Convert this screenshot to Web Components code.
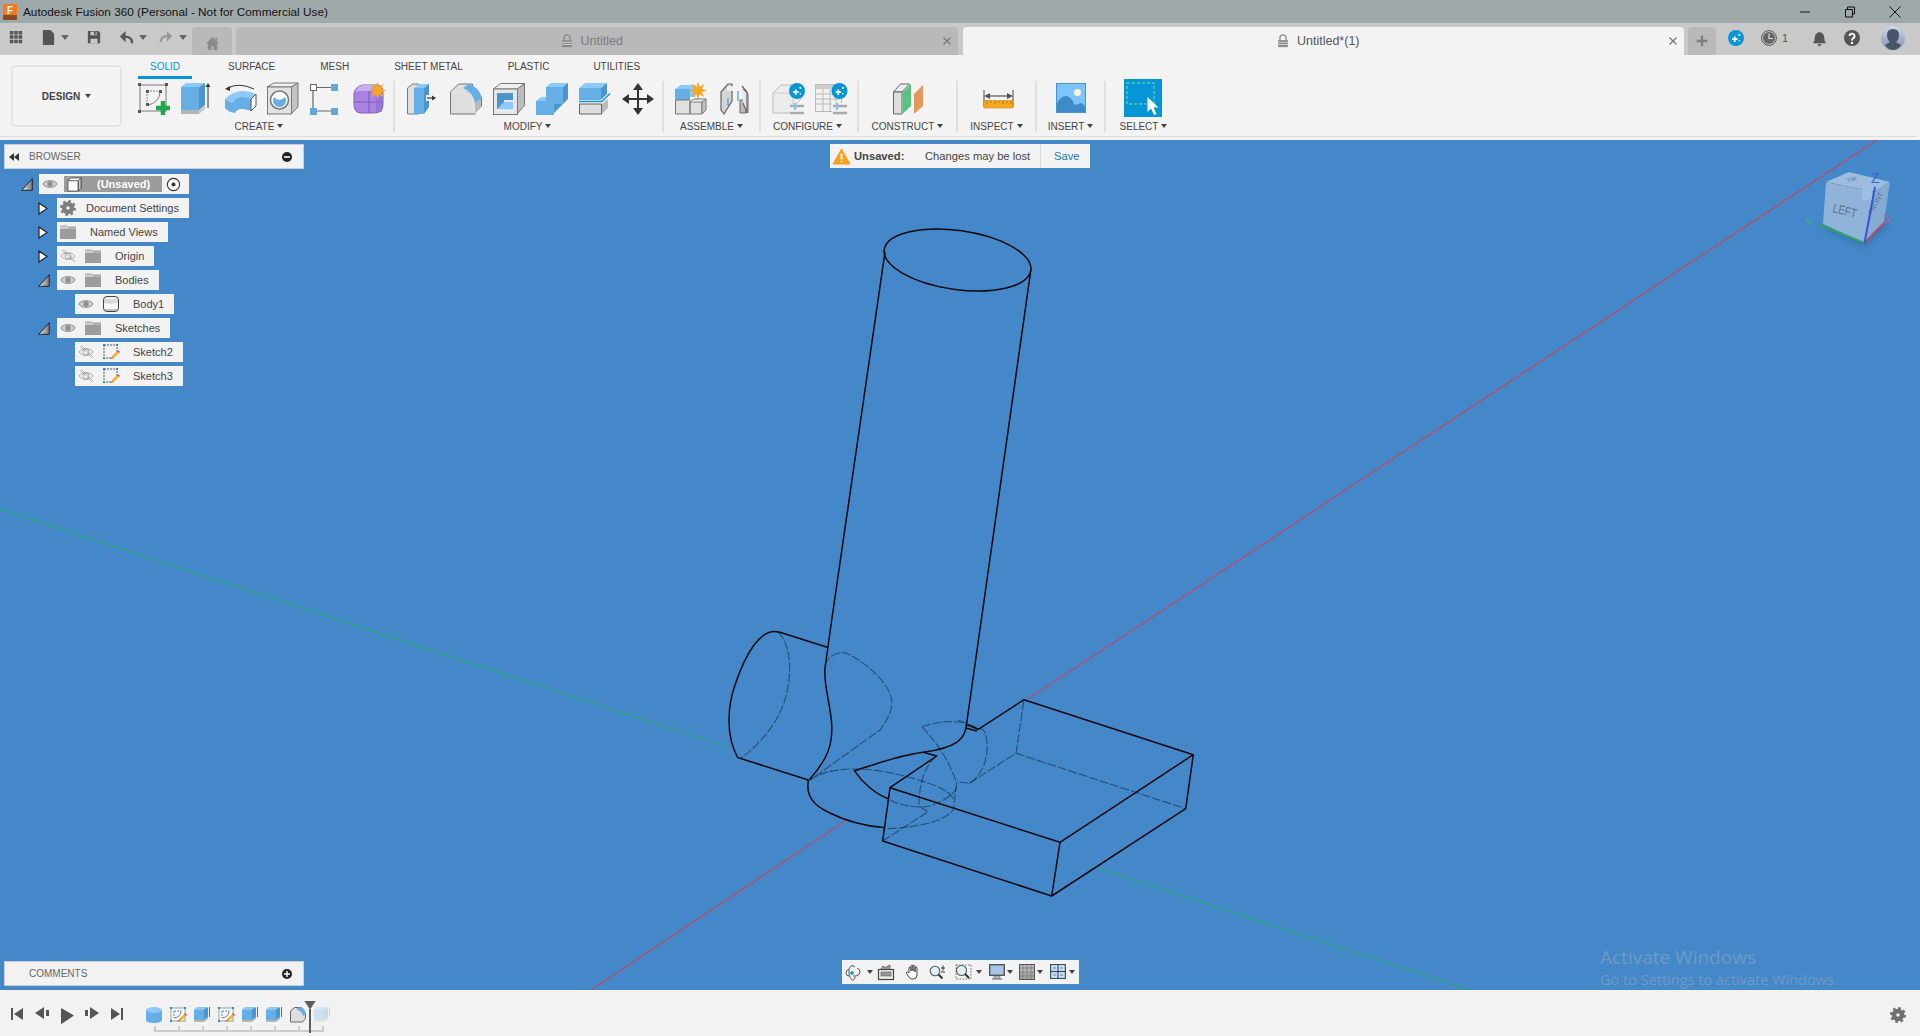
<!DOCTYPE html>
<html>
<head>
<meta charset="utf-8">
<title>Autodesk Fusion 360</title>
<style>
  html, body { margin: 0; height: 100%; overflow: hidden; }
  body { font-family: "Liberation Sans", Arial, sans-serif; color: #444; background: #f3f3f3; }
  #app { display: flex; flex-direction: column; height: 1036px; }
</style>
</head>
<body>
<div id="app">
  <title-bar></title-bar>
  <tab-bar></tab-bar>
  <tool-ribbon>
    <ribbon-group label="CREATE" style="--w:262px;--pad:5px;--gap:11px;--shift:-8px">
      <fu-icon name="sketch"></fu-icon><fu-icon name="extrude"></fu-icon><fu-icon name="revolve"></fu-icon>
      <fu-icon name="hole"></fu-icon><fu-icon name="pattern"></fu-icon><fu-icon name="form"></fu-icon>
    </ribbon-group>
    <ribbon-group label="MODIFY" style="--w:269px;--pad:12px;--gap:11px;--shift:-2px">
      <fu-icon name="presspull"></fu-icon><fu-icon name="fillet"></fu-icon><fu-icon name="shell"></fu-icon>
      <fu-icon name="combine"></fu-icon><fu-icon name="split"></fu-icon><fu-icon name="move"></fu-icon>
    </ribbon-group>
    <ribbon-group label="ASSEMBLE" style="--w:97px;--pad:11px;--gap:13px">
      <fu-icon name="component"></fu-icon><fu-icon name="joint"></fu-icon>
    </ribbon-group>
    <ribbon-group label="CONFIGURE" style="--w:98px;--pad:11px;--gap:11px;--shift:-3px">
      <fu-icon name="configure"></fu-icon><fu-icon name="table"></fu-icon>
    </ribbon-group>
    <ribbon-group label="CONSTRUCT" style="--w:99px;--pad:34px;--gap:0px">
      <fu-icon name="construct"></fu-icon>
    </ribbon-group>
    <ribbon-group label="INSPECT" style="--w:79px;--pad:25px;--gap:0px">
      <fu-icon name="inspect"></fu-icon>
    </ribbon-group>
    <ribbon-group label="INSERT" style="--w:69px;--pad:19px;--gap:0px">
      <fu-icon name="insert"></fu-icon>
    </ribbon-group>
    <ribbon-group label="SELECT" last style="--w:75px;--pad:18px;--gap:0px">
      <fu-icon name="select" size="38" style="margin-top:-4px"></fu-icon>
    </ribbon-group>
  </tool-ribbon>
  <model-view>
    <browser-panel>
      <browser-node root toggle="open" eye="on" kind="cube" label="(Unsaved)"></browser-node>
      <browser-node level="1" toggle="closed" kind="gear" label="Document Settings" style="--tg:1px"></browser-node>
      <browser-node level="1" toggle="closed" kind="folder" label="Named Views"></browser-node>
      <browser-node level="1" toggle="closed" eye="off" kind="folder" label="Origin"></browser-node>
      <browser-node level="1" toggle="open" eye="on" kind="folder" label="Bodies"></browser-node>
      <browser-node level="2" eye="on" kind="body" label="Body1"></browser-node>
      <browser-node level="1" toggle="open" eye="on" kind="folder" label="Sketches"></browser-node>
      <browser-node level="2" eye="off" kind="sketchnode" label="Sketch2"></browser-node>
      <browser-node level="2" eye="off" kind="sketchnode" label="Sketch3"></browser-node>
    </browser-panel>
    <unsaved-banner></unsaved-banner>
    <view-cube></view-cube>
    <comments-panel></comments-panel>
    <nav-bar></nav-bar>
    <activate-note></activate-note>
  </model-view>
  <time-line></time-line>
</div>

<script>
const FRONT = "#66aee6", TOP = "#8cc8f8", SIDE = "#4b95cd", GREY = "#dadada", GSIDE = "#b4b4b4", EDGE = "#777";
const star = (cx, cy, r) => {
  let p = [];
  for (let i = 0; i < 16; i++) {
    const a = i * Math.PI / 8, q = i % 2 ? r * 0.45 : r;
    p.push((cx + q * Math.sin(a)).toFixed(1) + "," + (cy - q * Math.cos(a)).toFixed(1));
  }
  return `<polygon points="${p.join(" ")}" fill="#f7a51c"/>`;
};
const spark = (cx, cy, r) => `<circle cx="${cx}" cy="${cy}" r="${r}" fill="#0696d7"/>
  <path d="M${cx - r * .5} ${cy + r * .15}h${r * .7}M${cx - r * .15} ${cy - r * .2}v${r * .7}" stroke="#fff" stroke-width="${r * .22}"/>
  <circle cx="${cx + r * .42}" cy="${cy - r * .38}" r="${r * .14}" fill="#fff"/><circle cx="${cx + r * .42}" cy="${cy + r * .35}" r="${r * .1}" fill="#fff"/>`;
const gear = (c, r, col) => `<circle cx="${c}" cy="${c}" r="${r * .5}" fill="none" stroke="${col}" stroke-width="${r * .56}"/>
  <circle cx="${c}" cy="${c}" r="${r * .86}" fill="none" stroke="${col}" stroke-width="${r * .28}" stroke-dasharray="${(r * .86 * Math.PI / 8).toFixed(2)}"/>`;
const eyeOn = `<path d="M1 8c3-4.500 11-4.500 14 0c-3 4.500-11 4.500-14 0z" fill="#d8d8d8" stroke="#9a9a9a" stroke-width="1.300"/><circle cx="8" cy="8" r="2.800" fill="#8f8f8f"/>`;
const pencil = `<path d="M8 15l1-3 5-5 2 2-5 5z" fill="#f3b33d"/><path d="M14 7l1-1 2 2-1 1z" fill="#e8434a"/><path d="M8 15l1-2 1 1z" fill="#555"/>`;

const ICONS = {
  sketch: [32, `<rect x="2" y="2" width="26" height="26" fill="none" stroke="#777"/>
    <path d="M9 8h12M9 8v14" stroke="#888" stroke-dasharray="2 1" fill="none"/><path d="M22 8c0 8-5 13-13 14" fill="none" stroke="#777"/>
    <path d="M0 0h3v3H0zM27 0h3v3h-3zM0 27h3v3H0zM8 7h3v3H8zM21 7h3v3h-3zM8 20h3v3H8z" fill="#555"/>
    <path d="M18 25h14M25 18v14" stroke="#1ea84c" stroke-width="4.500"/>`],
  extrude: [32, `<path d="M0 4l5-4h19l-6 4z" fill="${TOP}"/><path d="M0 4h18v23H0z" fill="${FRONT}"/><path d="M18 4l6-4v22l-6 5z" fill="${SIDE}"/>
    <path d="M0 27h18v4H0z" fill="${GSIDE}"/><path d="M18 27l6-5v4l-6 5z" fill="#c8c8c8"/>
    <path d="M27 25V3" stroke="#333"/><path d="M27 0l2.500 4h-5z" fill="#333"/>`],
  revolve: [32, `<path d="M1 16Q14 3 32 11l-5 5Q14 10 8 20z" fill="${TOP}"/><path d="M1 16l7 4Q14 10 27 16v12Q14 23 11 30 4 29 1 25z" fill="${FRONT}"/>
    <path d="M27 16l5-5v12l-5 5z" fill="#fff" stroke="#555"/><path d="M4 5Q15-1 30 6" fill="none" stroke="#333"/><path d="M1 6l5-3 0 5z" fill="#333"/>`],
  hole: [32, `<path d="M0 4l7-4h24l-7 4z" fill="#efefef" stroke="${EDGE}" stroke-width="1"/><path d="M24 4l7-4v24l-7 7z" fill="#c4c4c4" stroke="${EDGE}"/>
    <rect x=".5" y="4" width="24" height="27" fill="#e2e2e2" stroke="${EDGE}"/><circle cx="12.500" cy="17" r="9" fill="#fff" stroke="#777" stroke-width="1.500"/>
    <path d="M7 14a6.500 6.500 0 1 0 11 0q-6 6-11 0z" fill="${FRONT}"/>`],
  pattern: [32, `<path d="M6 4.500h15M3 8v17M6 28h15" stroke="#666" stroke-width="1.200"/><rect x=".5" y="1.500" width="6" height="6" fill="#fff" stroke="#666"/>
    <rect x="21" y="1" width="7" height="7" fill="#5fa9e0"/><rect x="0" y="25" width="7" height="7" fill="#5fa9e0"/><rect x="21" y="25" width="7" height="7" fill="#5fa9e0"/>`],
  form: [32, `<path d="M1 10q2-7 9-8h14q6 0 6 8v12q0 8-9 8H8q-7 0-7-9z" fill="#a884e0" stroke="#8360bf"/><path d="M2 9q2-6 9-7h12l-6 6H5z" fill="#c7aef0"/>
    <path d="M1 19h29M16 8v22" stroke="#7f5cc0" stroke-width="1.200"/><path d="M26 14v15" stroke="#8d6ccb" stroke-width="6" opacity=".6"/>${star(24.500, 7.500, 9)}`],
  presspull: [32, `<path d="M.5 5l5-4h6v30H.5z" fill="#e0e0e0" stroke="${EDGE}"/><path d="M7 5l5-4h10l-5 4z" fill="${TOP}"/><path d="M7 5h10v26H7z" fill="${FRONT}"/>
    <path d="M17 5l5-4v23l-5 7z" fill="${SIDE}"/><rect x="19" y="12" width="9" height="6" fill="#f3f3f3"/><path d="M20 15h7" stroke="#333" stroke-width="1.200"/><path d="M29 15l-4-2.500v5z" fill="#333"/>`],
  fillet: [32, `<path d="M.5 9l8-8h14v8l9 5v9l-6 6v2H.5z" fill="#dedede" stroke="${EDGE}"/><path d="M25 18l6-5v10l-6 8z" fill="#b9b9b9"/>
    <path d="M13 5l6-4q10 3 13 14l-7 5q-2-11-12-15z" fill="${FRONT}"/><path d="M1 9h10q13 2 14 22" fill="none" stroke="#e8e8e8"/>`],
  shell: [32, `<path d="M.5 6l7-5.500h24l-7 5.500z" fill="#f0f0f0" stroke="${EDGE}"/><path d="M24.500 6l7-5.500v22l-7 8z" fill="#bdbdbd" stroke="${EDGE}"/>
    <rect x=".5" y="6" width="24" height="25.500" fill="#e6e6e6" stroke="${EDGE}"/><path d="M4 10h16v7H11v9H4z" fill="#4b95cd"/><path d="M4 26l7-7h9v8H4z" fill="${TOP}"/><path d="M4 27h16" stroke="#fff"/>`],
  combine: [32, `<path d="M10 4l5-4h17l-5 4zM0 18l5-4h6l-1 4z" fill="${TOP}"/><path d="M10 4h17v17h-9v11H0V18h10z" fill="${FRONT}"/><path d="M27 4l5-4v16l-5 5zM18 21h9l-3 3-6 6z" fill="${SIDE}"/>`],
  split: [32, `<path d="M0 5l6-5h22l-6 5z" fill="${TOP}"/><path d="M0 5h22v12H0z" fill="${FRONT}"/><path d="M22 5l6-5v11l-6 6z" fill="${SIDE}"/>
    <path d="M.5 21h22v10H.5z" fill="#dedede" stroke="#666"/><path d="M23 21l6-5v9l-6 6z" fill="#bbb"/>
    <path d="M0 18.500h23l8-8" fill="none" stroke="#1396e2" stroke-width="1.500"/>`],
  move: [32, `<path d="M16 4v24M4 16h24" stroke="#333" stroke-width="2"/><path d="M16 0l5 7H11zM16 32l5-7H11zM0 16l7-5v10zM32 16l-7-5v10z" fill="#333"/>`],
  component: [32, `<path d="M.5 14v-8l5-4h15v12z" fill="${TOP}"/><path d="M0 6h15v12H0z" fill="${FRONT}"/><path d="M.5 17h14.500v14H.5zM15 19h12v12H15z" fill="#e0e0e0" stroke="#777"/>
    <path d="M27 19l4-3v11l-4 4z" fill="#c4c4c4" stroke="#777"/><path d="M15 19l4-3h12" fill="#eee" stroke="#777"/>${star(23, 7.500, 9)}`],
  joint: [32, `<path d="M1 9l7-8h4v17l-8 13-3-4z" fill="#d4d4d4" stroke="#666" stroke-width="1.200"/><path d="M7 3h6v5H7z" fill="#eee"/><path d="M8 15v8" stroke="#2288d0"/>
    <path d="M20 17h6v13h-6z" fill="#bbb" stroke="#666"/><path d="M22 3l5 6v21l-4-10" fill="#e6e6e6" stroke="#666" stroke-width="1.200"/><path d="M23 6l5 5v19" fill="none" stroke="#666"/>
    <path d="M18 8v10" stroke="#2288d0"/>`],
  configure: [32, `<path d="M1 10l8-8h16l4 4v10l-7 7v7H1z" fill="#ececec" stroke="#bcbcbc"/><path d="M1 10h20v22" fill="none" stroke="#ccc"/>
    <rect x="18" y="21" width="14" height="11" fill="#f3f3f3"/><path d="M18 23h14M18 30h14" stroke="#aaa" stroke-width="2.500"/><path d="M23 20v7" stroke="#8cc1ea" stroke-width="2.500"/>${spark(25, 8, 8)}`],
  table: [32, `<rect x=".5" y="1.500" width="26" height="27" fill="#f1f1f1" stroke="#bbb"/><path d="M1 2h26v4H1z" fill="#ccc"/><path d="M1 11h25M1 16h25M1 21h25M8 6v22M15 6v22M21 6v22" stroke="#bbb"/>
    <rect x="17" y="20" width="15" height="12" fill="#f3f3f3"/><path d="M18 23h14M18 30h14" stroke="#aaa" stroke-width="2.500"/><path d="M22 20v7" stroke="#8cc1ea" stroke-width="2.500"/>${spark(24.500, 8, 8)}`],
  construct: [32, `<path d="M.5 9l7-8h9L9 9z" fill="#eee" stroke="#666"/><path d="M.5 9H9v22H.5z" fill="#dedede" stroke="#666"/><path d="M9.500 9.500L18 1v22l-8.500 8z" fill="#58c480"/><path d="M21 11l9-9v21l-9 8z" fill="#e5965c"/>`],
  inspect: [32, `<path d="M1 7v17M30 7v17" stroke="#666" stroke-width="1.200"/><path d="M3 13h25" stroke="#555" stroke-width="1.200"/><path d="M1 13l6-3v6zM30 13l-6-3v6z" fill="#555"/>
    <rect x="1" y="17.500" width="29" height="7.500" fill="#f5a623" stroke="#d08a10" stroke-width=".6"/><path d="M4 18v3M8 18v2M12 18v3M16 18v2M20 18v3M24 18v2M28 18v3" stroke="#9c6a0a" stroke-width=".8"/>`],
  insert: [32, `<rect x=".5" y=".5" width="29" height="29" fill="#7cc4fa" stroke="#4a93cf"/><path d="M1 29V20q4-7 9-7t8 8l3 1 3-2q3 0 5 4v5z" fill="#3d8cc8"/><circle cx="21.500" cy="9.500" r="3.500" fill="#fbf4c8"/>`],
  select: [38, `<rect width="38" height="38" fill="#0696d7"/><rect x="3" y="4" width="27" height="21" fill="none" stroke="#7fdc9a" stroke-width="1" stroke-dasharray="3 2"/>
    <path d="M23.500 18v15l3.500-3.500 3 6.500 2.500-1-3-6.500h5z" fill="#fff"/>`],
  grid: [16, `<path d="M1 1h4v4H1zM6 1h4v4H6zM11 1h4v4h-4zM1 6h4v4H1zM6 6h4v4H6zM11 6h4v4h-4zM1 11h4v4H1zM6 11h4v4H6zM11 11h4v4h-4z" fill="#555"/>`],
  file: [16, `<path d="M2 0h8l4 4v12H2z" fill="#555"/>`],
  save: [16, `<path d="M1 1h12l2 2v12H1z" fill="#555"/><path d="M4 2h7v4H4zM4 10h8v5H4z" fill="#c9c9c9"/><path d="M8 2h2v3H8z" fill="#555"/>`],
  undo: [16, `<path d="M14 14Q14 7 6 7H4" fill="none" stroke="#555" stroke-width="2.500"/><path d="M7 1L1 7l6 6z" fill="#555"/>`],
  redo: [16, `<path d="M2 14Q2 7 10 7h2" fill="none" stroke="#999" stroke-width="2.500"/><path d="M9 1l6 6-6 6z" fill="#999"/>`],
  home: [16, `<path d="M8 1L1 8h2v7h4v-4h2v4h4V8h2z" fill="#8b8b8b"/><path d="M11 2h2v4l-2-2z" fill="#8b8b8b"/>`],
  lock: [16, `<path d="M4.500 7V4.500a3.500 3.500 0 0 1 7 0V7" fill="none" stroke="#888" stroke-width="1.500"/><path d="M2.500 7h11v8h-11z" fill="#888"/><path d="M2.500 9.500h11M2.500 12h11" stroke="#ddd"/>`],
  close: [16, `<path d="M4 4l8 8M12 4l-8 8" stroke="#777" stroke-width="1.500"/>`],
  plus: [16, `<path d="M8 2v12M2 8h12" stroke="#7d7d7d" stroke-width="2.600"/>`],
  spark: [16, spark(8, 8, 8)],
  clock: [16, `<circle cx="8" cy="8" r="7.400" fill="none" stroke="#555"/><circle cx="8" cy="8" r="6" fill="#666"/><path d="M8 3.500V8.500h4" fill="none" stroke="#ddd" stroke-width="1.200"/>`],
  bell: [16, `<path d="M8 1q-5 1-5 6 0 4-2 6h14q-2-2-2-6 0-5-5-6z" fill="#555"/><path d="M6 14a2 2 0 0 0 4 0z" fill="#555"/>`],
  help: [16, `<circle cx="8" cy="8" r="8" fill="#555"/><path d="M5.500 6a2.500 2.500 0 1 1 3.500 2.400Q8 9 8 10.500" fill="none" stroke="#fff" stroke-width="1.900"/><circle cx="8" cy="13" r="1.200" fill="#fff"/>`],
  rewind: [10, `<path d="M5 1L0 5l5 4zM10 1L5 5l5 4z" fill="#333"/>`],
  eyeon: [16, eyeOn],
  eyeoff: [16, `<path d="M1 8c3-4.500 11-4.500 14 0c-3 4.500-11 4.500-14 0z" fill="none" stroke="#aaa"/><circle cx="8" cy="8" r="3" fill="none" stroke="#aaa"/><path d="M2 2l12 12M3.500 1.500l12 12" stroke="#aaa" stroke-width=".8"/>`],
  folder: [16, `<path d="M0 1.500h7l1 2H0z" fill="#b4b4b4"/><path d="M0 4.500h16v10.500H0z" fill="#9c9c9c"/><path d="M8 2.500h8v2H8z" fill="#a6a6a6"/>`],
  gear: [16, gear(8, 8, "#7d7d7d")],
  cube: [16, `<path d="M1 4l3-3h11v11l-3 3H1z" fill="#fff" stroke="#555"/><path d="M12 4l3-3v11l-3 3z" fill="#c9c9c9" stroke="#555"/><path d="M1 4h11v11" fill="none" stroke="#555"/>`],
  radio: [16, `<circle cx="8" cy="8" r="6.500" fill="#fff" stroke="#333" stroke-width="1.200"/><circle cx="8" cy="8" r="2.200" fill="#333"/>`],
  body: [16, `<rect x=".5" y=".5" width="15" height="15" rx="3.500" fill="#f6f6f6" stroke="#444"/><path d="M1 3h14v4a14 5 0 0 1-14 0z" fill="#d9d9d9"/><path d="M2 14h12" stroke="#7f8fa6"/>`],
  sketchnode: [16, `<path d="M1 1h13v9M1 1v13h7" fill="none" stroke="#555" stroke-dasharray="2 1"/><path d="M0 0h2v2H0zM13 0h2v2h-2zM0 13h2v2H0z" fill="#1c8fe0"/>${pencil}`],
  cylinder: [16, `<path d="M0 3v10q0 3 8 3t8-3V3z" fill="${FRONT}"/><ellipse cx="8" cy="3" rx="8" ry="3" fill="${TOP}"/>`],
  minisketch: [16, `<rect x="1" y="1" width="14" height="13" fill="#fff" stroke="#999"/><path d="M4 4h7M4 4v7" stroke="#1c8fe0" stroke-dasharray="2 1"/><path d="M11 4q0 6-7 7" fill="none" stroke="#777"/>
    <path d="M0 0h2v2H0zM14 0h2v2h-2zM0 13h2v2H0z" fill="#1c8fe0"/>${pencil}`],
  miniextrude: [16, `<path d="M0 2.500L3 0h11l-4 2.500z" fill="${TOP}"/><path d="M0 2.500h10V13H0z" fill="${FRONT}"/><path d="M10 2.500L14 0v10l-4 3z" fill="${SIDE}"/><path d="M0 13h10v2H0zM10 13l4-3v2l-4 3z" fill="${GSIDE}"/><path d="M15.500 0v10" stroke="#444" stroke-width=".8"/>`],
  minifillet: [16, `<path d="M.5 4l4-3.500h7l4 6v5l-3 3.500H.5z" fill="#dedede" stroke="#666"/><path d="M6 2l4-2q5 1 6 7l-3 2q-1-5-7-7z" fill="${FRONT}"/>`],
  first: [12, `<path d="M0 0h2v12H0zM12 0v12L3 6z" fill="#555"/>`],
  prev: [14, `<path d="M9 0v12L0 6zM11 3h3v6h-3z" fill="#555"/>`],
  play: [12, `<path d="M0 0l12 7L0 15z" fill="#555"/>`],
  next: [14, `<path d="M5 0v12l9-6zM0 3h3v6H0z" fill="#555"/>`],
  last: [12, `<path d="M12 0h-2v12h2zM0 0v12l9-6z" fill="#555"/>`],
  gearbig: [16, gear(8, 8, "#6f6f6f")],
  orbit: [16, `<path d="M4 5q-3 1-3 4t3 3M12 4q3 1 3 4t-4 4H8M6 2c-2 1-3 6-1 11s5 3 5 0" fill="none" stroke="#555"/><path d="M6 2q2-1 4 1" fill="none" stroke="#555"/><path d="M5 9h4M7 7v4" stroke="#0696d7" stroke-width="1.500"/>`],
  look: [16, `<rect x=".5" y="5.500" width="15" height="10" fill="#eee" stroke="#444" stroke-width="1.200"/><rect x="3" y="8" width="10" height="4" fill="#999" stroke="#555" stroke-width=".6"/><path d="M3 5l2-3 2 1.500 5-2.500v4" fill="#999" stroke="#555" stroke-width=".7"/>`],
  hand: [16, `<path d="M4 9V4q0-1 1-1t1 1v3V2q0-1 1-1t1 1v5V2.500q0-1 1-1t1 1V8V4q0-1 1-1t1 1v7q0 4-4 4H7q-2 0-3-2L1.500 9.500q-.5-1.500 1-1.500z" fill="#fff" stroke="#333" stroke-width=".9"/>`],
  zoom: [16, `<circle cx="6" cy="7" r="4.800" fill="#dff1f6" stroke="#555" stroke-width="1.100"/><path d="M9.500 10.500l4 4" stroke="#333" stroke-width="2.200"/><path d="M12 4h4M14 1.500v5M12 8h4" stroke="#333"/>`],
  fit: [16, `<rect x="1" y="1" width="15" height="14" fill="none" stroke="#666" stroke-dasharray="1.500 1.500"/><circle cx="6.500" cy="6.500" r="5" fill="#dff1f6" stroke="#555" stroke-width="1.100"/><path d="M10 10l4 4" stroke="#333" stroke-width="2.200"/>`],
  display: [16, `<rect x=".7" y=".7" width="14.600" height="10.600" fill="#9cbfe0" stroke="#444" stroke-width="1.200"/><path d="M2 2h12v8H2z" fill="#a7c7e6"/><path d="M5 12h6v2H5z" fill="#ccc" stroke="#555" stroke-width=".5"/><path d="M3 15h10" stroke="#555"/>`],
  gridview: [16, `<rect x=".5" y=".5" width="15" height="15" fill="#bbb" stroke="#555"/><path d="M4 1v14M8 1v14M12 1v14M1 4h14M1 8h14M1 12h14" stroke="#777" stroke-width=".8"/><rect x="1" y="9" width="14" height="6" fill="#888" opacity=".4"/>`],
  viewports: [16, `<path d="M.7.7h14.600v13.600H.7z" fill="#fff" stroke="#2f4f72" stroke-width="1.300"/><path d="M8 1v13M1 7.500h14" stroke="#2f4f72" stroke-width="1.300"/><path d="M2.500 2.500h4v3h-4zM9.500 2.500h4v3h-4zM2.500 9.500h4v3h-4zM9.500 9.500h4v3h-4z" fill="#8fb4d8"/>`],
  warn: [18, `<path d="M9 1L18 17H0z" fill="#f7a21b" stroke="#f7a21b" stroke-linejoin="round"/><path d="M9 6v6" stroke="#fff" stroke-width="2"/><circle cx="9" cy="14.300" r="1.100" fill="#fff"/>`],
  winmin: [12, `<path d="M1 6h10" stroke="#111"/>`],
  winmax: [12, `<path d="M3.500 3V1h7v7H8.500M1.500 3.500h7v7.500h-7z" fill="none" stroke="#111"/>`],
  winclose: [12, `<path d="M.5.5l11 11M11.500.5l-11 11" stroke="#111"/>`],
  avatar: [24, `<defs><linearGradient id="av" x1="0" y1="0" x2="0" y2="1"><stop offset="0" stop-color="#cfd8e6"/><stop offset="1" stop-color="#7b93b5"/></linearGradient></defs>
    <circle cx="12" cy="12" r="12" fill="url(#av)"/><path d="M12 3q6 0 6 6 0 5-3 7l5 3q-3 5-8 5T4 19l5-3q-3-2-3-7 0-6 6-6z" fill="#48556a"/>`],
};

class FuIcon extends HTMLElement {
  connectedCallback() {
    const [vb, body] = ICONS[this.getAttribute("name")];
    const size = this.getAttribute("size") || (vb === 32 ? 32 : vb);
    this.attachShadow({ mode: "open" }).innerHTML = `
      <style>:host { display: block; flex: none; width: ${size}px; height: ${size}px; } svg { display: block; overflow: visible; }</style>
      <svg width="${size}" height="${size}" viewBox="0 0 ${vb} ${vb}">${body}</svg>`;
  }
}
customElements.define("fu-icon", FuIcon);

const CARET = `.caret { flex: none; width: 0; height: 0; border: 3px solid transparent; border-top: 4px solid #444; border-bottom: 0; display: inline-block; }`;

class TitleBar extends HTMLElement {
  constructor() {
    super();
    this.attachShadow({ mode: "open" }).innerHTML = `
      <style>
        :host { display: flex; align-items: center; flex: none; height: 23px; background: #a0a9a9; color: #111; font-size: 11.800px; }
        .logo { width: 14px; height: 16px; margin: 0 6px 0 3px; background: linear-gradient(#f47a1f 70%, #8a4a20 70%); border-radius: 1px;
                color: #fff; font-size: 10px; font-weight: bold; text-align: center; line-height: 13px; }
        .title { flex: 1; }
      </style>
      <div class="logo">F</div>
      <div class="title">Autodesk Fusion 360 (Personal - Not for Commercial Use)</div>
      <fu-icon name="winmin" style="margin-right:33px"></fu-icon>
      <fu-icon name="winmax" style="margin-right:33px"></fu-icon>
      <fu-icon name="winclose" style="margin-right:19px"></fu-icon>`;
  }
}
customElements.define("title-bar", TitleBar);

class DocTab extends HTMLElement {
  constructor() {
    super();
    this.attachShadow({ mode: "open" }).innerHTML = `
      <style>
        :host { display: flex; align-items: center; flex: 1; height: 28px; border-radius: 4px 4px 0 0; background: #b9b9b9; color: #7a7a7a; font-size: 12.500px; padding: 0 4px 0 10px; box-sizing: border-box; }
        :host([active]) { background: #f3f3f3; color: #555; }
        .mid { flex: 1; display: flex; justify-content: center; align-items: center; gap: 7px; padding-right: 3px; }
      </style>
      <div class="mid"><fu-icon name="lock" size="14"></fu-icon><span><slot></slot></span></div>
      <fu-icon name="close" size="14"></fu-icon>`;
  }
}
customElements.define("doc-tab", DocTab);

class TabBar extends HTMLElement {
  constructor() {
    super();
    this.attachShadow({ mode: "open" }).innerHTML = `
      <style>
        :host { display: flex; align-items: flex-end; flex: none; height: 32px; background: #c9c9c9; padding-left: 9px; box-sizing: border-box; }
        .tools { display: flex; align-items: center; height: 32px; padding-bottom: 4px; box-sizing: border-box; }
        ${CARET}
        .caret { border-top-color: #666; border-left-width: 4px; border-right-width: 4px; border-top-width: 5px; }
        .home { width: 40px; height: 28px; margin: 0 4px 0 5px; background: #b9b9b9; border-radius: 4px 4px 0 0; display: flex; align-items: center; justify-content: center; padding-top: 4px; box-sizing: border-box; }
        .tabs { display: flex; gap: 5px; width: 1448px; }
        .plus { width: 28px; height: 28px; margin-left: 4px; background: #b9b9b9; border-radius: 4px 4px 0 0; display: flex; align-items: center; justify-content: center; flex: none; }
        .right { display: flex; align-items: center; height: 32px; padding-bottom: 2px; box-sizing: border-box; color: #555; font-size: 11px; }
      </style>
      <div class="tools">
        <fu-icon name="grid" size="14"></fu-icon>
        <fu-icon name="file" size="15" style="margin-left:18px"></fu-icon><span class="caret" style="margin-left:5px"></span>
        <fu-icon name="save" size="14" style="margin-left:18px"></fu-icon>
        <fu-icon name="undo" size="15" style="margin-left:18px"></fu-icon><span class="caret" style="margin-left:5px"></span>
        <fu-icon name="redo" size="14" style="margin-left:12px"></fu-icon><span class="caret" style="margin-left:6px"></span>
      </div>
      <div class="home"><fu-icon name="home" size="15"></fu-icon></div>
      <div class="tabs"><doc-tab>Untitled</doc-tab><doc-tab active>Untitled*(1)</doc-tab></div>
      <div class="plus"><fu-icon name="plus" size="14"></fu-icon></div>
      <div class="right">
        <fu-icon name="spark" size="16" style="margin-left:12px"></fu-icon>
        <fu-icon name="clock" size="16" style="margin-left:17px"></fu-icon><span style="margin-left:5px">1</span>
        <fu-icon name="bell" size="15" style="margin-left:24px"></fu-icon>
        <fu-icon name="help" size="16" style="margin-left:17px"></fu-icon>
        <fu-icon name="avatar" size="24" style="margin-left:21px"></fu-icon>
      </div>`;
  }
}
customElements.define("tab-bar", TabBar);

class ToolRibbon extends HTMLElement {
  constructor() {
    super();
    this.attachShadow({ mode: "open" }).innerHTML = `
      <style>
        :host { display: flex; flex: none; height: 85px; background: #f3f3f3; padding-left: 11px; box-sizing: border-box; position: relative; font-size: 10px; color: #444; }
        .design { flex: none; width: 111px; height: 62px; margin-top: 10px; box-sizing: border-box; border: 2px solid #e4e4e4; border-radius: 5px;
                  display: flex; align-items: center; justify-content: center; gap: 5px; font-weight: bold; }
        ${CARET}
        .main { margin-left: 11px; display: flex; flex-direction: column; }
        .tabs { display: flex; gap: 22px; height: 24px; padding-left: 5px; align-items: stretch; }
        .tab { padding: 0 12px; display: flex; align-items: center; box-sizing: border-box; height: 24px; padding-top: 1px; border-bottom: 3px solid transparent; }
        .tab.on { color: #0696d7; border-bottom-color: #0696d7; }
        .groups { display: flex; margin-top: 2px; }
        .rule { position: absolute; left: 0; right: 3px; top: 81px; height: 1px; background: #dedede; }
      </style>
      <div class="design">DESIGN <span class="caret"></span></div>
      <div class="main">
        <div class="tabs">
          <div class="tab on">SOLID</div><div class="tab" style="margin-left:2px">SURFACE</div><div class="tab" style="margin-left:-1px">MESH</div>
          <div class="tab" style="margin-left:-1px">SHEET METAL</div><div class="tab" style="margin-left:-1px">PLASTIC</div><div class="tab" style="margin-left:-2px">UTILITIES</div>
        </div>
        <div class="groups"><slot></slot></div>
      </div>
      <div class="rule"></div>`;
  }
}
customElements.define("tool-ribbon", ToolRibbon);

class RibbonGroup extends HTMLElement {
  constructor() {
    super();
    this.attachShadow({ mode: "open" });
  }
  connectedCallback() {
    this.shadowRoot.innerHTML = `
      <style>
        :host { display: flex; flex-direction: column; flex: none; width: var(--w); height: 51px; box-sizing: border-box; border-right: 2px solid #dfdfdf; }
        :host([last]) { border-right: 0; }
        .icons { display: flex; gap: var(--gap); padding-left: var(--pad); height: 32px; margin-top: 2px; }
        .label { display: flex; align-items: center; justify-content: center; gap: 3px; height: 14px; margin-top: 5px; padding-right: calc(-1 * var(--shift, 0px)); font-size: 10px; color: #444; }
        ${CARET}
      </style>
      <div class="icons"><slot></slot></div>
      <div class="label">${this.getAttribute("label")} <span class="caret"></span></div>`;
  }
}
customElements.define("ribbon-group", RibbonGroup);

// solid edges and hidden edges of the model, page coordinates
const SOLID_EDGES = [
  "M885 252L831.700 620L825 668C823 690 835 715 831 740C829 755 820 768 809 780",
  "M1031 269L981.300 620L966.700 723C966 740 955 748 923.300 752.300C900 755 880 763 854.300 770.700C862 782 875 794 889 799",
  "M923.300 752.300L936.700 756L890 787.700L1060 842.300L1193.300 754.700L1024 699.700L978.300 729.300L965.700 724.300",
  "M890 787.700L882.700 841L1051.700 896L1060 842.300M1051.700 896L1185.700 808.700L1193.300 754.700",
  "M738.300 757.700L808.300 780M778.300 631.700L827.300 647.300",
  "M778 632C760 628 745 655 735 685C728 705 725 735 738 758",
  "M808.300 780C806 795 812 805 830 813C848 822 865 826 883.500 827.500",
  "M966 728L977 731",
];
const HIDDEN_EDGES = [
  "M778 632C792 645 792 675 785 700C778 722 760 745 741 758",
  "M825 665C828 655 838 652 846 653C866 662 892 685 892 703C892 715 880 730 880 730L810 780",
  "M810 780C825 768 860 765 900 775C925 781 953 790 953 800",
  "M890 800C900 806 925 810 935 804C945 800 957 793 957 785",
  "M956.700 783L953.300 810C945 820 925 827 883 829",
  "M936 756C926 766 919 780 919 806L928 811.700L882.700 841",
  "M921.700 726.700Q945 719 965 723M921.700 726.700Q945 750 956.700 783",
  "M958 720L983.300 730C989 738 988 755 983.300 766.700C979 775 975 780 969.300 783.300L956.700 781.700",
  "M969.300 783.300L1016 753.300L1024 699.700M1016 753.300L1185.700 808.700",
];

class ModelView extends HTMLElement {
  constructor() {
    super();
    this.attachShadow({ mode: "open" }).innerHTML = `
      <style>
        :host { display: block; flex: 1; position: relative; background: #4488c9; overflow: hidden; }
        svg { position: absolute; inset: 0; }
      </style>
      <svg width="1920" height="850" viewBox="0 140 1920 850" fill="none">
        <path d="M0 509L730 748M1097 868L1470 990" stroke="#27a578" stroke-width="1.300"/>
        <path d="M591 990L847 820M1028 699L1877 140" stroke="#b0506e" stroke-width="1.400"/>
        <g stroke="#16263c" stroke-opacity=".6" stroke-width="1.100" stroke-dasharray="9 2">${HIDDEN_EDGES.map(d => `<path d="${d}"/>`).join("")}</g>
        <g stroke="#05090f" stroke-width="1.500" stroke-linejoin="round">
          <ellipse cx="957.500" cy="260" rx="74" ry="29.500" transform="rotate(8.100 957.500 260)"/>
          ${SOLID_EDGES.map(d => `<path d="${d}"/>`).join("")}
        </g>
      </svg>
      <slot></slot>`;
  }
}
customElements.define("model-view", ModelView);

class PanelHead extends HTMLElement {
  constructor() {
    super();
    this.attachShadow({ mode: "open" });
  }
  connectedCallback() {
    const rewind = this.hasAttribute("rewind") ? `<fu-icon name="rewind" size="10" class="rw"></fu-icon>` : "";
    const sign = this.hasAttribute("plus") ? `<path d="M2 5h6M5 2v6" stroke="#fff" stroke-width="1.400"/>` : `<path d="M2 5h6" stroke="#fff" stroke-width="1.600"/>`;
    this.shadowRoot.innerHTML = `
      <style>
        :host { display: flex; align-items: center; width: 300px; height: 25px; box-sizing: border-box; background: #f2f2f2; border: 1px solid #c9ccd0; color: #666; font-size: 10px; }
        .rw { position: absolute; margin-left: 4px; }
        .name { margin-left: 24px; flex: 1; }
        svg { margin-right: 11px; }
      </style>
      ${rewind}<span class="name">${this.getAttribute("label")}</span>
      <svg width="10" height="10" viewBox="0 0 10 10"><circle cx="5" cy="5" r="5" fill="#222"/>${sign}</svg>`;
  }
}
customElements.define("panel-head", PanelHead);

class BrowserPanel extends HTMLElement {
  constructor() {
    super();
    this.attachShadow({ mode: "open" }).innerHTML = `
      <style>
        :host { position: absolute; left: 4px; top: 4px; display: flex; flex-direction: column; }
        .tree { display: flex; flex-direction: column; gap: 4px; margin-top: 5px; }
      </style>
      <panel-head label="BROWSER" rewind></panel-head>
      <div class="tree"><slot></slot></div>`;
  }
}
customElements.define("browser-panel", BrowserPanel);

class BrowserNode extends HTMLElement {
  constructor() {
    super();
    this.attachShadow({ mode: "open" });
  }
  connectedCallback() {
    const level = +this.getAttribute("level") || 0;
    const toggle = this.getAttribute("toggle");
    const eye = this.getAttribute("eye");
    const kind = this.getAttribute("kind");
    const label = this.getAttribute("label");
    const tri = toggle === "open"
      ? `<svg width="12" height="13" viewBox="0 0 12 13"><defs><linearGradient id="t" x1="0" x2="1"><stop offset="0" stop-color="#eee"/><stop offset="1" stop-color="#777"/></linearGradient></defs><path d="M.7 12.300L11.300.7v11.600z" fill="url(#t)" stroke="#222"/></svg>`
      : toggle === "closed"
      ? `<svg width="10" height="13" viewBox="0 0 10 13"><path d="M1 1l8 5.500L1 12z" fill="#fff" stroke="#222" stroke-width="1.200"/></svg>` : "";
    const eyeMark = eye ? `<fu-icon name="eye${eye}" size="16"></fu-icon>` : "";
    const rootOnly = this.hasAttribute("root");
    this.shadowRoot.innerHTML = `
      <style>
        :host { display: flex; align-items: center; height: 20px; padding-left: ${level * 18 + 15}px; font-size: 11px; color: #444; }
        .tg { width: 21px; flex: none; display: flex; align-items: center; margin-left: ${level ? 1 : 2}px; margin-right: ${level ? -2 : -3}px; }
        .row { display: flex; align-items: center; height: 20px; background: #f2f2f2; padding: 0 10px 0 3px; gap: 9px; }
        .row.root { padding-right: 8px; gap: 6px; }
        .text { margin-left: var(--tg, 5px); white-space: nowrap; }
        .mark { display: flex; align-items: center; width: 98px; height: 16px; background: #9c9c9c; padding-left: 3px; box-sizing: border-box; color: #fff; font-weight: bold; }
        .mark span { margin-left: 15px; }
      </style>
      <div class="tg">${tri}</div>
      ${rootOnly ? `
        <div class="row root">${eyeMark}
          <div class="mark"><fu-icon name="${kind}" size="15"></fu-icon><span>${label}</span></div>
          <fu-icon name="radio" size="15" style="margin-left:-2px"></fu-icon>
        </div>` : `
        <div class="row">${eyeMark}<fu-icon name="${kind}" size="16"></fu-icon><span class="text">${label}</span></div>`}`;
  }
}
customElements.define("browser-node", BrowserNode);

class UnsavedBanner extends HTMLElement {
  constructor() {
    super();
    this.attachShadow({ mode: "open" }).innerHTML = `
      <style>
        :host { position: absolute; left: 830px; top: 4px; width: 260px; height: 24px; display: flex; align-items: center; background: #f3f3f3; font-size: 11.200px; color: #444; }
        b { margin-left: 4px; flex: none; width: 51px; white-space: nowrap; }
        .msg { margin-left: 20px; width: 115px; flex: none; white-space: nowrap; }
        .save { border-left: 1px solid #d8d8d8; height: 24px; display: flex; align-items: center; padding-left: 13px; color: #1878bd; }
      </style>
      <fu-icon name="warn" size="17" style="margin-left:3px"></fu-icon>
      <b>Unsaved:</b><span class="msg">Changes may be lost</span><span class="save">Save</span>`;
  }
}
customElements.define("unsaved-banner", UnsavedBanner);

class ViewCube extends HTMLElement {
  constructor() {
    super();
    this.attachShadow({ mode: "open" }).innerHTML = `
      <style>
        :host { position: absolute; left: 1800px; top: 28px; width: 100px; height: 85px; }
        svg { display: block; overflow: visible; }
      </style>
      <svg width="100" height="85" viewBox="1800 168 100 85" font-family="'Liberation Sans', sans-serif">
        <defs><filter id="sh" x="-30%" y="-30%" width="160%" height="160%"><feGaussianBlur stdDeviation="3"/></filter></defs>
        <path d="M1823 228L1864 247L1888 226L1870 205z" fill="#2c5f92" opacity=".55" filter="url(#sh)"/>
        <path d="M1826 182L1849 172L1890 182L1874 192z" fill="#9cbde0"/>
        <path d="M1826 182L1823 224L1864 243L1874 192z" fill="#8fb3d9"/>
        <path d="M1874 192L1890 182L1884 222L1864 243z" fill="#86aad2"/>
        <path d="M1826 182L1874 192L1890 182" fill="none" stroke="#7c8ea6" stroke-width=".7" stroke-dasharray="3 2"/>
        <rect x="1862" y="189" width="10" height="11" fill="#9dbfe2"/>
        <text transform="translate(1832 212) rotate(14) scale(1 1.250)" font-size="10" fill="#5f7390">LEFT</text>
        <text transform="translate(1872 215) rotate(-62)" font-size="7" fill="#5f7390">FRONT</text>
        <text transform="translate(1847 182) rotate(-8)" font-size="5" fill="#5f7390">TOP</text>
        <path d="M1817 224L1864.500 243" stroke="#2fa36a" stroke-width="2"/>
        <path d="M1864.500 243L1884 223" stroke="#b04e68" stroke-width="2"/>
        <path d="M1864.500 243L1875 187" stroke="#2e55e0" stroke-width="2"/>
        <text x="1871" y="183" font-size="14" fill="#3a62d8">Z</text>
        <text x="1805" y="227" font-size="13" fill="#37ad8c">Y</text>
        <text x="1883" y="224" font-size="13" fill="#a66480">X</text>
      </svg>`;
  }
}
customElements.define("view-cube", ViewCube);

class CommentsPanel extends HTMLElement {
  constructor() {
    super();
    this.attachShadow({ mode: "open" }).innerHTML = `
      <style>:host { position: absolute; left: 4px; bottom: 4px; }</style>
      <panel-head label="COMMENTS" plus></panel-head>`;
  }
}
customElements.define("comments-panel", CommentsPanel);

class NavBar extends HTMLElement {
  constructor() {
    super();
    const ic = (n, ml) => `<fu-icon name="${n}" size="16" style="margin-left:${ml}px"></fu-icon>`;
    const ca = (ml) => `<span class="caret" style="margin-left:${ml}px"></span>`;
    this.attachShadow({ mode: "open" }).innerHTML = `
      <style>
        :host { position: absolute; left: 842px; top: 820px; width: 237px; height: 24px; background: #f2f2f2; display: flex; align-items: center; }
        ${CARET}
        .caret { border-left-width: 3px; border-right-width: 3px; }
      </style>
      ${ic("orbit", 3)}${ca(6)}${ic("look", 5)}${ic("hand", 11)}${ic("zoom", 8)}${ic("fit", 10)}${ca(5)}
      ${ic("display", 7)}${ca(2)}${ic("gridview", 6)}${ca(2)}${ic("viewports", 7)}${ca(3)}`;
  }
}
customElements.define("nav-bar", NavBar);

class ActivateNote extends HTMLElement {
  constructor() {
    super();
    this.attachShadow({ mode: "open" }).innerHTML = `
      <style>
        :host { position: absolute; left: 1600px; top: 808px; color: #7199c4; font-family: "Open Sans", sans-serif; white-space: nowrap; line-height: 1; }
        .a { font-size: 19px; }
        .b { font-size: 14.500px; margin-top: 6px; }
      </style>
      <div class="a">Activate Windows</div>
      <div class="b">Go to Settings to activate Windows.</div>`;
  }
}
customElements.define("activate-note", ActivateNote);

class TimeLine extends HTMLElement {
  constructor() {
    super();
    const steps = ["cylinder", "minisketch", "miniextrude", "minisketch", "miniextrude", "miniextrude", "minifillet"];
    this.attachShadow({ mode: "open" }).innerHTML = `
      <style>
        :host { display: flex; flex: none; height: 46px; align-items: center; background: #f2f2f2; padding: 2px 0 0 11px; box-sizing: border-box; position: relative; }
        .strip { display: flex; gap: 8px; margin: 1px 0 0 23px; position: relative; }
        .track { position: absolute; left: 8px; width: 170px; top: 19px; height: 6px; border-bottom: 2px solid #ccc; box-sizing: border-box;
                 background: repeating-linear-gradient(90deg, #ccc 0 2px, transparent 2px 24px); }
        .marker { position: absolute; left: 158px; top: -6px; width: 12px; height: 9px; background: #5e5e5e; clip-path: polygon(0 0, 100% 0, 50% 100%); }
        .stem { position: absolute; left: 163px; top: 2px; width: 2px; height: 24px; background: #5e5e5e; }
        .ghost { opacity: .25; }
      </style>
      <fu-icon name="first" size="12"></fu-icon>
      <fu-icon name="prev" size="14" style="margin-left:12px"></fu-icon>
      <fu-icon name="play" size="13" style="margin-left:12px"></fu-icon>
      <fu-icon name="next" size="14" style="margin-left:11px"></fu-icon>
      <fu-icon name="last" size="12" style="margin-left:12px"></fu-icon>
      <div class="strip">
        <div class="track"></div>
        ${steps.map(s => `<fu-icon name="${s}" size="16"></fu-icon>`).join("")}
        <fu-icon name="miniextrude" size="16" class="ghost"></fu-icon>
        <div class="marker"></div><div class="stem"></div>
      </div>
      <fu-icon name="gearbig" size="16" style="position:absolute;right:14px;top:17px"></fu-icon>`;
  }
}
customElements.define("time-line", TimeLine);
</script>
</body>
</html>
